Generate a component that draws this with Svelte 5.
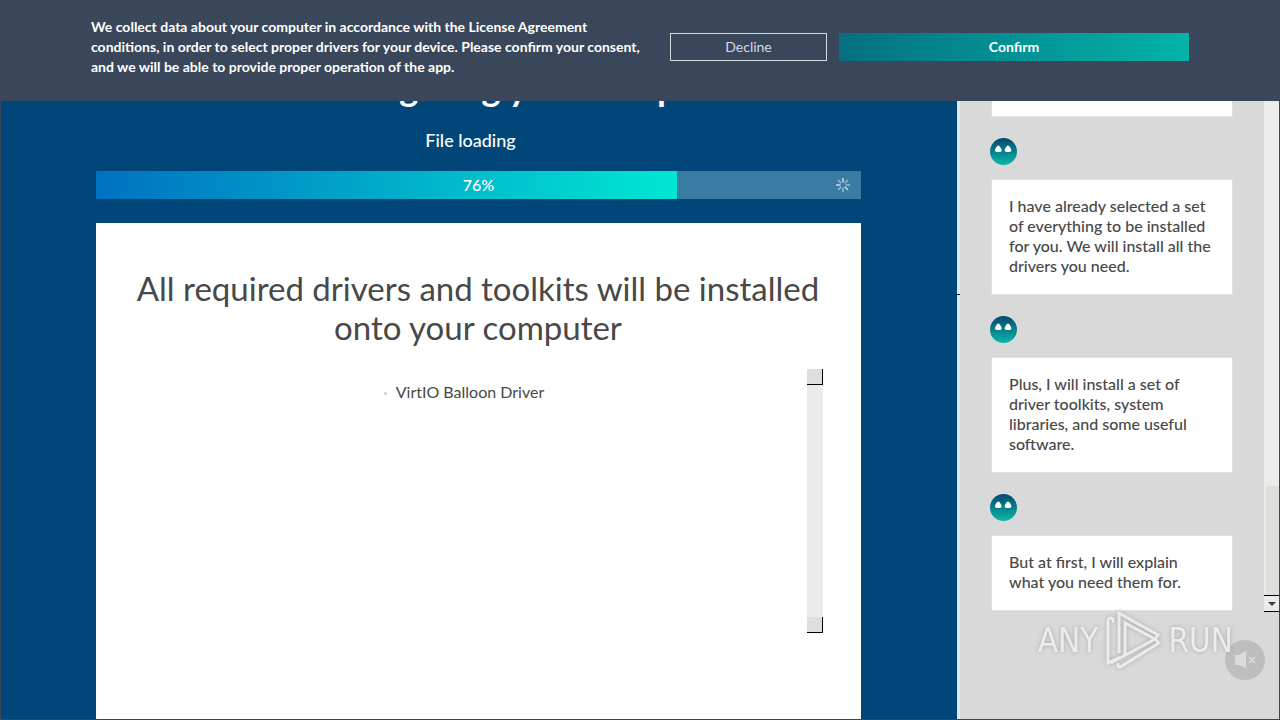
<script>
  let showConsent = $state(true);
  let muted = $state(true);

  const progress = 76;
  const drivers = ['VirtIO Balloon Driver'];

  const messages = [
    'I have already selected a set\nof everything to be installed\nfor you. We will install all the\ndrivers you need.',
    'Plus, I will install a set of\ndriver toolkits, system\nlibraries, and some useful\nsoftware.',
    'But at first, I will explain\nwhat you need them for.'
  ];

  const rays = [0, 45, 90, 135, 180, 225, 270, 315];
</script>

<div class="window">
  {#if showConsent}
    <section class="consent">
      <p>
        We collect data about your computer in accordance with the License Agreement<br />
        conditions, in order to select proper drivers for your device. Please confirm your consent,<br />
        and we will be able to provide proper operation of the app.
      </p>
      <div class="actions">
        <button class="decline" onclick={() => (showConsent = false)}>Decline</button>
        <button class="confirm" onclick={() => (showConsent = false)}>Confirm</button>
      </div>
    </section>
  {/if}

  <main>
    <header>
      <h1>We are configuring your computer</h1>
      <p>File loading</p>
    </header>

    <div
      class="progress"
      role="progressbar"
      aria-label="File loading"
      aria-valuenow={progress}
      aria-valuemin="0"
      aria-valuemax="100"
    >
      <div class="fill" style="width: {progress}%"></div>
      <span>{progress}%</span>
      <svg class="spinner" viewBox="0 0 16 16" width="16" height="16">
        {#each rays as angle, i}
          <line
            x1="8"
            y1="5.5"
            x2="8"
            y2="1"
            stroke={i % 3 ? '#8fbcd8' : '#c3d8ee'}
            stroke-width="1.6"
            transform="rotate({angle} 8 8)"
          />
        {/each}
      </svg>
    </div>

    <section class="panel">
      <h2>All required drivers and toolkits will be installed<br />onto your computer</h2>
      <div class="list">
        <ul>
          {#each drivers as driver}
            <li><span>{driver}</span></li>
          {/each}
        </ul>
        <div class="track">
          <button aria-label="Scroll up"></button>
          <button aria-label="Scroll down"></button>
        </div>
      </div>
    </section>
  </main>

  <aside>
    <div class="chat">
      <div class="messages">
        <div class="card"></div>
        {#each messages as message}
          <svg class="avatar" viewBox="0 0 27 27" width="27" height="27">
            <defs>
              <linearGradient id="face" x1="0" y1="0" x2="0" y2="1">
                <stop offset="0" stop-color="#06496f" />
                <stop offset="0.5" stop-color="#087f8b" />
                <stop offset="1" stop-color="#0bb8a9" />
              </linearGradient>
            </defs>
            <circle cx="13.5" cy="13.5" r="13.5" fill="url(#face)" />
            <path
              d="M5 12.5C5 11 7 7.500 8.300 7.500S11.700 11 11.700 12.500C11.700 14.500 5 14.500 5 12.500ZM14.700 12.500C14.700 11 16.700 7.500 18 7.500S21.400 11 21.400 12.500C21.400 14.500 14.700 14.500 14.700 12.500Z"
              fill="#fff"
            />
          </svg>
          <div class="card">{message}</div>
        {/each}
      </div>
      <div class="scrollbar">
        <div class="thumb"></div>
        <button aria-label="Scroll down">
          <svg viewBox="0 0 8 4" width="8" height="4"><path d="M0 0H8L4 4Z" fill="#3c3c46" /></svg>
        </button>
      </div>
    </div>
    <footer>
      <button class="mute" aria-label="Sound" aria-pressed={muted} onclick={() => (muted = !muted)}>
        <svg viewBox="0 0 40 40" width="40" height="40">
          <path d="M10 15H14L21 11V28L14 25H10Z" fill="#dcdcdc" />
          <path d="M24 17L30 23M30 17L24 23" stroke="#dcdcdc" stroke-width="1.5" />
        </svg>
      </button>
      <div class="brand">
        <span>ANY</span>
        <svg viewBox="0 0 56 64" width="56" height="64" fill="none" stroke="#f1f1f1" stroke-width="3">
          <path d="M8 14V10Q3 7 3 14V54L15 48" />
          <path d="M14 44V4L53 26L50 30L20 14V46" />
          <path d="M6 54L50 30L54 34L17 57Q12 60 13 54" />
        </svg>
        <span>RUN</span>
      </div>
    </footer>
  </aside>
</div>

<style>
  :global(body) {
    margin: 0;
  }
  .window {
    position: relative;
    box-sizing: border-box;
    display: flex;
    height: 100vh;
    overflow: hidden;
    border: 1px solid #3d4659;
    background: #004678;
    color: #484848;
    font-family: Lato, 'Open Sans', sans-serif;
  }
  p,
  h1,
  h2,
  ul {
    margin: 0;
    padding: 0;
  }
  button {
    box-sizing: border-box;
    margin: 0;
    padding: 0;
    border: none;
    font-family: inherit;
    cursor: pointer;
  }
  .consent {
    position: fixed;
    inset: 0 0 auto 0;
    z-index: 2;
    box-sizing: border-box;
    display: flex;
    justify-content: space-between;
    height: 101px;
    padding: 17px 91px;
    background: #3a465a;
    color: #fff;
  }
  .consent p {
    font-size: 14px;
    font-weight: 700;
    line-height: 20px;
    white-space: nowrap;
  }
  .actions {
    display: flex;
    gap: 12px;
    height: 28px;
    padding-top: 16px;
  }
  .actions button {
    height: 28px;
    padding-bottom: 2px;
    font-size: 14px;
    color: #fff;
  }
  .actions .decline {
    width: 157px;
    border: 1px solid #d4dae2;
    background: transparent;
    color: #d4dae2;
    font-weight: 400;
  }
  .actions .confirm {
    width: 350px;
    background: linear-gradient(90deg, #047080, #02b3a9);
    font-weight: 700;
  }
  main {
    flex: 1;
    display: flex;
    flex-direction: column;
    min-width: 0;
    padding: 66px 96px 0 95px;
  }
  header {
    padding-right: 16px;
    color: #fff;
    text-align: center;
  }
  h1 {
    font-size: 36px;
    font-weight: 700;
    line-height: 40px;
  }
  header p {
    padding: 21px 0 19px;
    font-size: 18px;
    font-weight: 500;
    line-height: 24px;
  }
  .progress {
    position: relative;
    flex: none;
    height: 28px;
    background: #397ba2;
    color: #fff;
    font-size: 16px;
    font-weight: 500;
    line-height: 28px;
    text-align: center;
  }
  .fill {
    position: absolute;
    inset: 0 auto 0 0;
    background: linear-gradient(90deg, #0071c1, #00e7d3);
  }
  .progress span {
    position: relative;
  }
  .spinner {
    position: absolute;
    top: 6px;
    right: 10px;
  }
  .panel {
    flex: none;
    height: 100vh;
    margin-top: 24px;
    padding: 46px 38px 0 37px;
    box-sizing: border-box;
    background: #fff;
  }
  h2 {
    font-size: 33px;
    font-weight: 400;
    line-height: 39px;
    text-align: center;
    white-space: nowrap;
  }
  .list {
    display: flex;
    height: 264px;
    margin-top: 22px;
  }
  ul {
    flex: 1;
    padding-top: 13px;
    list-style: none;
    text-align: center;
  }
  li {
    font-size: 16px;
    line-height: 20px;
  }
  li span {
    position: relative;
  }
  li span::before {
    content: '';
    position: absolute;
    top: 10px;
    left: -12px;
    width: 3px;
    height: 3px;
    border-radius: 50%;
    background: #cfcfcf;
  }
  .track {
    display: flex;
    flex-direction: column;
    justify-content: space-between;
    width: 16px;
    background: #ebebeb;
  }
  .track button {
    height: 16px;
    border-right: 1px solid #000;
    border-bottom: 1px solid #000;
    background: #dedede;
  }
  aside {
    position: relative;
    flex: none;
    display: flex;
    flex-direction: column;
    width: 322px;
    box-sizing: border-box;
    border-left: 3px solid #dfeaf3;
    background: #d9d9d9;
  }
  aside::before {
    content: '';
    position: absolute;
    top: 293px;
    left: -3px;
    width: 3px;
    height: 1px;
    background: #000;
  }
  .chat {
    flex: 1;
    display: flex;
    min-height: 0;
  }
  .messages {
    flex: 1;
    display: flex;
    flex-direction: column;
    justify-content: flex-end;
    min-width: 0;
    padding: 0 31px 1px 30px;
  }
  .avatar {
    flex: none;
    margin: 21px 0 14px;
  }
  .card {
    flex: none;
    margin-left: 1px;
    padding: 16px 17px 18px;
    border: 1px solid #e2e2e2;
    background: #fff;
    font-size: 16px;
    font-weight: 500;
    line-height: 20px;
    white-space: pre;
  }
  .card:first-child {
    min-height: 40px;
  }
  .scrollbar {
    flex: none;
    display: flex;
    flex-direction: column;
    justify-content: flex-end;
    width: 15px;
    background: #ececec;
  }
  .thumb {
    height: 109px;
    margin-left: 2px;
    background: #dfdfdc;
  }
  .scrollbar button {
    display: flex;
    align-items: center;
    justify-content: center;
    height: 17px;
    border-top: 1px solid #000;
    border-bottom: 1px solid #000;
    background: #ececec;
  }
  footer {
    position: relative;
    height: 107px;
  }
  .mute {
    position: absolute;
    right: 14px;
    bottom: 39px;
    width: 40px;
    height: 40px;
    border-radius: 50%;
    background: #bebebe;
  }
  .mute svg {
    display: block;
  }
  .brand {
    position: absolute;
    right: 46px;
    bottom: 46px;
    display: flex;
    align-items: center;
    gap: 7px;
    color: #f1f1f1;
    font-family: 'DejaVu Sans Condensed', Lato, sans-serif;
    font-size: 33px;
    line-height: 64px;
    filter: drop-shadow(0 0 2px #999);
    opacity: 0.8;
    pointer-events: none;
  }
</style>
